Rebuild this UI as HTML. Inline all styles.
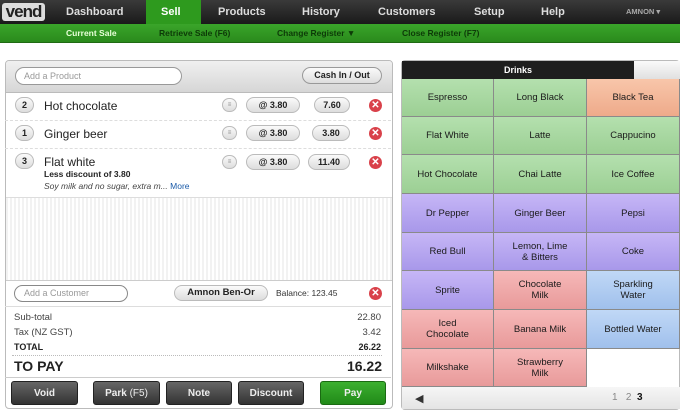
<!DOCTYPE html><html><head><style>
*{margin:0;padding:0;box-sizing:border-box}
body{width:680px;height:411px;overflow:hidden;background:#fff;font-family:"Liberation Sans",sans-serif;position:relative;color:#222}
.a{position:absolute}
.top{left:0;top:0;width:680px;height:24px;background:linear-gradient(#3a3a3a,#1a1a1a)}
.nav{top:0;height:24px;line-height:24px;color:#ddd;font-weight:bold;font-size:11px}
.sub{left:0;top:24px;width:680px;height:19px;background:linear-gradient(#3aa52a,#2a8a1c);border-bottom:1px solid #1f6a14}
.sn{top:24px;height:19px;line-height:19px;font-size:8.5px;font-weight:bold;color:#0d3a08}
.pill{position:absolute;border:1px solid #bbb;border-radius:10px;background:linear-gradient(#fafafa,#ddd);font-size:9px;font-weight:bold;text-align:center}
.x{position:absolute;width:13px;height:13px;border-radius:50%;background:#d9414a;color:#fff;font-size:10px;line-height:13px;text-align:center;font-weight:bold}
.cell{position:absolute;border-right:1px solid #8a8a8a;border-bottom:1px solid #8a8a8a;font-size:9.5px;display:flex;align-items:center;justify-content:center;text-align:center;line-height:11px;color:#1a1a1a}
.g{background:linear-gradient(#b4e0ae,#9ccf94)}.o{background:linear-gradient(#f8c6aa,#eeaa8a)}.p{background:linear-gradient(#c6b6f6,#a898ea)}.r{background:linear-gradient(#f6b8b8,#e89a9a)}.b{background:linear-gradient(#c0d8f6,#a0c0ec)}
.btn{position:absolute;top:381px;height:24px;border-radius:3px;background:linear-gradient(#666,#333);color:#eee;font-size:10px;font-weight:bold;text-align:center;line-height:24px;border:1px solid #222}
</style></head><body>
<div class="a top"></div>
<div class="a" style="left:2px;top:3px;width:43px;height:18px;background:#ddd;border-radius:3px;color:#222;font-size:17px;line-height:18px;text-align:center;font-weight:bold;letter-spacing:-1px">vend</div>
<div class="a" style="left:146px;top:0;width:55px;height:25px;background:#2e9a1e"></div>
<div class="a nav" style="left:66px">Dashboard</div>
<div class="a nav" style="left:161px;color:#fff">Sell</div>
<div class="a nav" style="left:218px">Products</div>
<div class="a nav" style="left:302px">History</div>
<div class="a nav" style="left:378px">Customers</div>
<div class="a nav" style="left:474px">Setup</div>
<div class="a nav" style="left:541px">Help</div>
<div class="a nav" style="left:626px;font-size:7.5px;color:#aaa">AMNON ▾</div>
<div class="a sub"></div>
<div class="a sn" style="left:66px;color:#e8ffd8">Current Sale</div>
<div class="a sn" style="left:159px">Retrieve Sale (F6)</div>
<div class="a sn" style="left:277px">Change Register ▼</div>
<div class="a sn" style="left:402px">Close Register (F7)</div>

<div class="a" style="left:5px;top:60px;width:388px;height:349px;border:1px solid #bbb;border-radius:4px;background:#fff;overflow:hidden">
<div class="a" style="left:0;top:0;width:388px;height:32px;background:linear-gradient(#f0f0f0,#d6d6d6);border-bottom:1px solid #bbb"></div>
<div class="a" style="left:9px;top:6px;width:167px;height:18px;border:1px solid #999;border-radius:9px;background:#fff;font-size:9px;color:#999;line-height:16px;padding-left:8px">Add a Product</div>
<div class="pill" style="left:296px;top:6px;width:80px;height:17px;line-height:15px;border-color:#999">Cash In / Out</div>
<div class="a" style="left:0;top:136px;width:388px;height:84px;background:repeating-linear-gradient(90deg,#f2f2f2 0 2px,#fff 2px 4px);border-top:1px solid #ddd;border-bottom:1px solid #ccc"></div>
</div>
<div style="position:absolute;left:5px;top:120px;width:386px;border-top:1px dashed #ddd"></div>
<div style="position:absolute;left:5px;top:148px;width:386px;border-top:1px dashed #ddd"></div>
<div class="pill" style="left:15px;top:97px;width:19px;height:16px;line-height:14px">2</div>
<div class="a" style="left:44px;top:99px;font-size:12px">Hot chocolate</div>
<div class="pill" style="left:15px;top:125px;width:19px;height:16px;line-height:14px">1</div>
<div class="a" style="left:44px;top:127px;font-size:12px">Ginger beer</div>
<div class="pill" style="left:15px;top:153px;width:19px;height:16px;line-height:14px">3</div>
<div class="a" style="left:44px;top:155px;font-size:12px">Flat white</div>
<div class="a" style="left:44px;top:169px;font-size:8.5px;font-weight:bold">Less discount of 3.80</div>
<div class="a" style="left:44px;top:181px;font-size:8.5px;font-style:italic;color:#444">Soy milk and no sugar, extra m... <span style="color:#1a5aa8;font-style:normal">More</span></div>
<div class="pill" style="left:222px;top:98px;width:15px;height:14px;font-size:6px;line-height:12px;color:#888">≡</div>
<div class="pill" style="left:246px;top:97px;width:54px;height:16px;line-height:14px">@ 3.80</div>
<div class="pill" style="left:314px;top:97px;width:36px;height:16px;line-height:14px">7.60</div>
<div class="x" style="left:369px;top:99px">✕</div>
<div class="pill" style="left:222px;top:126px;width:15px;height:14px;font-size:6px;line-height:12px;color:#888">≡</div>
<div class="pill" style="left:246px;top:125px;width:54px;height:16px;line-height:14px">@ 3.80</div>
<div class="pill" style="left:312px;top:125px;width:38px;height:16px;line-height:14px">3.80</div>
<div class="x" style="left:369px;top:127px">✕</div>
<div class="pill" style="left:222px;top:155px;width:15px;height:14px;font-size:6px;line-height:12px;color:#888">≡</div>
<div class="pill" style="left:246px;top:154px;width:54px;height:16px;line-height:14px">@ 3.80</div>
<div class="pill" style="left:308px;top:154px;width:42px;height:16px;line-height:14px">11.40</div>
<div class="x" style="left:369px;top:156px">✕</div>
<div class="a" style="left:14px;top:285px;width:114px;height:17px;border:1px solid #888;border-radius:9px;font-size:9px;color:#999;line-height:15px;padding-left:9px">Add a Customer</div>
<div class="pill" style="left:174px;top:285px;width:94px;height:16px;line-height:14px;font-size:9.5px">Amnon Ben-Or</div>
<div class="a" style="left:276px;top:288px;font-size:8.5px;color:#333">Balance: 123.45</div>
<div class="x" style="left:369px;top:287px">✕</div>
<div style="position:absolute;left:5px;top:306px;width:386px;border-top:1px solid #ddd"></div>
<div class="a" style="left:14px;top:312px;font-size:9.5px;color:#444">Sub-total</div><div class="a" style="left:346px;width:35px;text-align:right;top:312px;font-size:9.5px;color:#444">22.80</div>
<div class="a" style="left:14px;top:327px;font-size:9.5px;color:#444">Tax (NZ GST)</div><div class="a" style="left:346px;width:35px;text-align:right;top:327px;font-size:9.5px;color:#444">3.42</div>
<div class="a" style="left:14px;top:342px;font-size:9px;font-weight:bold">TOTAL</div><div class="a" style="left:346px;width:35px;text-align:right;top:342px;font-size:9px;font-weight:bold">26.22</div>
<div style="position:absolute;left:12px;top:355px;width:370px;border-top:1px dotted #bbb"></div>
<div class="a" style="left:14px;top:358px;font-size:14px;font-weight:bold">TO PAY</div><div class="a" style="left:320px;width:62px;text-align:right;top:358px;font-size:14px;font-weight:bold">16.22</div>
<div style="position:absolute;left:5px;top:377px;width:386px;border-top:1px solid #ccc"></div>
<div class="btn" style="left:11px;width:67px">Void</div>
<div class="btn" style="left:93px;width:67px">Park <span style="font-weight:normal">(F5)</span></div>
<div class="btn" style="left:166px;width:66px">Note</div>
<div class="btn" style="left:238px;width:66px">Discount</div>
<div class="btn" style="left:320px;width:66px;background:linear-gradient(#3cb030,#218a18);border-color:#1a6a12">Pay</div>

<div class="a" style="left:401px;top:60px;width:279px;height:350px;border:1px solid #bbb;border-radius:4px;background:#fff;overflow:hidden"></div>
<div class="a" style="left:402px;top:61px;width:232px;height:18px;background:#1e1e1e;color:#fff;font-size:9px;font-weight:bold;text-align:center;line-height:18px">Drinks</div>
<div class="a" style="left:634px;top:61px;width:46px;height:18px;background:linear-gradient(#fafafa,#e0e0e0)"></div>
<div class="cell g" style="left:402px;top:79px;width:92px;height:38px">Espresso</div>
<div class="cell g" style="left:494px;top:79px;width:93px;height:38px">Long Black</div>
<div class="cell o" style="left:587px;top:79px;width:93px;height:38px">Black Tea</div>
<div class="cell g" style="left:402px;top:117px;width:92px;height:38px">Flat White</div>
<div class="cell g" style="left:494px;top:117px;width:93px;height:38px">Latte</div>
<div class="cell g" style="left:587px;top:117px;width:93px;height:38px">Cappucino</div>
<div class="cell g" style="left:402px;top:155px;width:92px;height:39px">Hot Chocolate</div>
<div class="cell g" style="left:494px;top:155px;width:93px;height:39px">Chai Latte</div>
<div class="cell g" style="left:587px;top:155px;width:93px;height:39px">Ice Coffee</div>
<div class="cell p" style="left:402px;top:194px;width:92px;height:39px">Dr Pepper</div>
<div class="cell p" style="left:494px;top:194px;width:93px;height:39px">Ginger Beer</div>
<div class="cell p" style="left:587px;top:194px;width:93px;height:39px">Pepsi</div>
<div class="cell p" style="left:402px;top:233px;width:92px;height:38px">Red Bull</div>
<div class="cell p" style="left:494px;top:233px;width:93px;height:38px">Lemon, Lime<br>&amp; Bitters</div>
<div class="cell p" style="left:587px;top:233px;width:93px;height:38px">Coke</div>
<div class="cell p" style="left:402px;top:271px;width:92px;height:39px">Sprite</div>
<div class="cell r" style="left:494px;top:271px;width:93px;height:39px">Chocolate<br>Milk</div>
<div class="cell b" style="left:587px;top:271px;width:93px;height:39px">Sparkling<br>Water</div>
<div class="cell r" style="left:402px;top:310px;width:92px;height:39px">Iced<br>Chocolate</div>
<div class="cell r" style="left:494px;top:310px;width:93px;height:39px">Banana Milk</div>
<div class="cell b" style="left:587px;top:310px;width:93px;height:39px">Bottled Water</div>
<div class="cell r" style="left:402px;top:349px;width:92px;height:38px">Milkshake</div>
<div class="cell r" style="left:494px;top:349px;width:93px;height:38px">Strawberry<br>Milk</div>
<div class="a" style="left:402px;top:387px;width:278px;height:22px;background:linear-gradient(#f6f6f6,#e4e4e4)"></div>
<div class="a" style="left:415px;top:392px;font-size:11px;color:#333">◀</div>
<div class="a" style="left:612px;top:392px;font-size:10px;color:#888">1 &nbsp; 2 &nbsp;<b style="color:#111">3</b></div>
</body></html>
